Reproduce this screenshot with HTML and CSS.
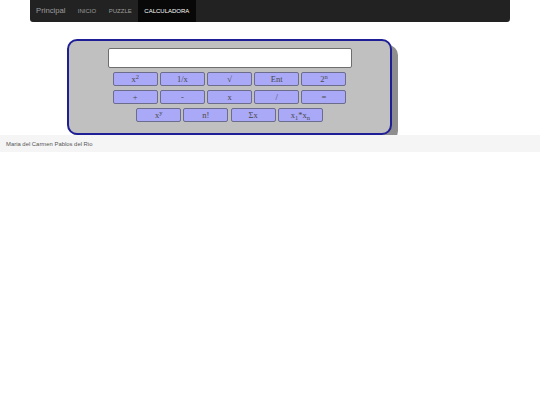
FILE: index.html
```html
<!DOCTYPE html>
<html lang="es">
<head>
<meta charset="utf-8">
<title>Calculadora</title>
<link rel="stylesheet" href="styles.css">
</head>
<body>
<nav class="navbar">
  <a class="brand" href="#">Principal</a>
  <ul class="menu">
    <li><a href="#">INICIO</a></li>
    <li><a href="#">PUZZLE</a></li>
    <li class="active"><a href="#">CALCULADORA</a></li>
  </ul>
</nav>
<main class="main">
  <div class="calc">
    <input class="display" type="text">
    <div class="row">
      <button class="key">x<sup>2</sup></button>
      <button class="key">1/x</button>
      <button class="key">√</button>
      <button class="key">Ent</button>
      <button class="key">2<sup>n</sup></button>
    </div>
    <div class="row">
      <button class="key">+</button>
      <button class="key">-</button>
      <button class="key">x</button>
      <button class="key">/</button>
      <button class="key">=</button>
    </div>
    <div class="row">
      <button class="key">x<sup>y</sup></button>
      <button class="key">n!</button>
      <button class="key">Σx</button>
      <button class="key">x<sub>1</sub>*x<sub>n</sub></button>
    </div>
  </div>
</main>
<footer class="footer">Maria del Carmen Pablos del Rio</footer>
</body>
</html>
```

FILE: styles.css
```css
html, body {
  margin: 0;
  padding: 0;
  background: #fff;
  font-family: "Liberation Sans", Arial, sans-serif;
}

.navbar {
  margin: 0 30px;
  width: 480px;
  height: 22px;
  background: #222;
  border-radius: 0 0 3px 3px;
  display: flex;
  align-items: stretch;
}

.brand {
  color: #9d9d9d;
  text-decoration: none;
  font-size: 7.7px;
  line-height: 22px;
  padding: 0 6px 0 6px;
}

.menu {
  list-style: none;
  margin: 0;
  padding: 0;
  display: flex;
}

.menu li a {
  display: block;
  color: #9d9d9d;
  text-decoration: none;
  font-size: 6px;
  line-height: 22px;
  padding: 0 6.3px;
}

.menu li.active a {
  background: #080808;
  color: #fff;
}

.main {
  padding: 17px 0 0 67px;
}

.calc {
  box-sizing: border-box;
  width: 325px;
  height: 96px;
  background: #c0c0c0;
  border: 2px solid #1e1e96;
  border-radius: 10px;
  box-shadow: 6px 6px 0 #8e8e8e;
  padding: 7px 0 0 0;
  display: flex;
  flex-direction: column;
  align-items: center;
  gap: 4px;
}

.display {
  box-sizing: border-box;
  width: 244px;
  height: 20px;
  margin: 0;
  background: #fff;
  border: 1px solid #6e6e6e;
  border-radius: 2px;
  padding: 0;
}

.row {
  display: flex;
  gap: 2.2px;
}

.key {
  box-sizing: border-box;
  width: 45px;
  height: 14px;
  margin: 0;
  padding: 0;
  background: #a9a9f7;
  border: 1px solid #6c6c8c;
  border-radius: 2px;
  font-family: "Liberation Serif", "Times New Roman", serif;
  font-size: 8.5px;
  line-height: 12px;
  color: #4a4a4a;
}

.key sup {
  font-size: 6.5px;
  line-height: 0;
  vertical-align: 3px;
}

.key sub {
  font-size: 6.5px;
  line-height: 0;
  vertical-align: -1.5px;
}

.footer {
  height: 17px;
  background: #f5f5f5;
  color: #555;
  font-size: 5.9px;
  line-height: 18px;
  padding-left: 6px;
}
```
